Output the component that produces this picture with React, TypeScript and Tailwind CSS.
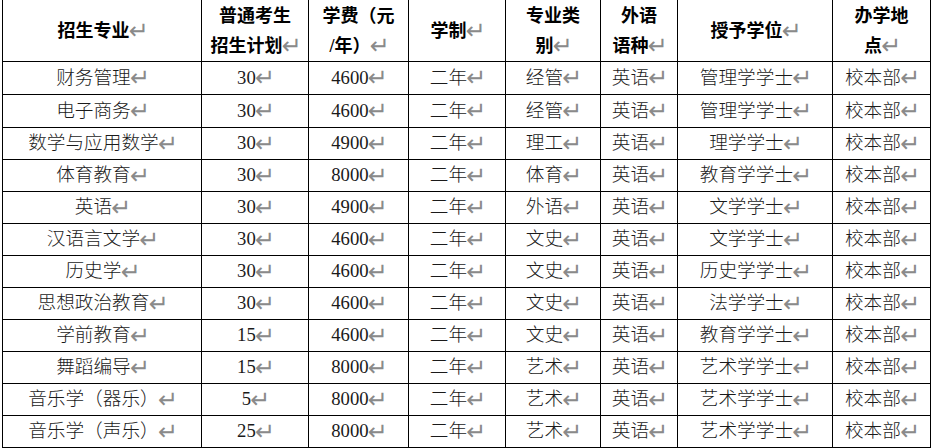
import React from "react";

const widths = ["w-[199px]", "w-[107px]", "w-[100px]", "w-[97px]", "w-[95px]", "w-[77px]", "w-[155px]", "w-[98px]"];

const header: string[][] = [
  ["招生专业"],
  ["普通考生", "招生计划"],
  ["学费（元", "/年）"],
  ["学制"],
  ["专业类", "别"],
  ["外语", "语种"],
  ["授予学位"],
  ["办学地", "点"],
];

const rows: string[][] = [
  ["财务管理", "30", "4600", "二年", "经管", "英语", "管理学学士", "校本部"],
  ["电子商务", "30", "4600", "二年", "经管", "英语", "管理学学士", "校本部"],
  ["数学与应用数学", "30", "4900", "二年", "理工", "英语", "理学学士", "校本部"],
  ["体育教育", "30", "8000", "二年", "体育", "英语", "教育学学士", "校本部"],
  ["英语", "30", "4900", "二年", "外语", "英语", "文学学士", "校本部"],
  ["汉语言文学", "30", "4600", "二年", "文史", "英语", "文学学士", "校本部"],
  ["历史学", "30", "4600", "二年", "文史", "英语", "历史学学士", "校本部"],
  ["思想政治教育", "30", "4600", "二年", "文史", "英语", "法学学士", "校本部"],
  ["学前教育", "15", "4600", "二年", "文史", "英语", "教育学学士", "校本部"],
  ["舞蹈编导", "15", "8000", "二年", "艺术", "英语", "艺术学学士", "校本部"],
  ["音乐学（器乐）", "5", "8000", "二年", "艺术", "英语", "艺术学学士", "校本部"],
  ["音乐学（声乐）", "25", "8000", "二年", "艺术", "英语", "艺术学学士", "校本部"],
];

const rowHeights = [
  "h-[33px]", "h-[33px]", "h-[32px]", "h-[32px]", "h-[32px]", "h-[32px]",
  "h-[32px]", "h-[32px]", "h-[32px]", "h-[32px]", "h-[32px]", "h-[32px]",
];

function Mark() {
  return (
    <span className="inline-block text-[24px] leading-none text-[#8a8a8a] font-['DejaVu_Sans',sans-serif] font-normal -ml-[1px] -mr-[2px]">↵</span>
  );
}

export default function App() {
  return (
    <div className="w-[935px] h-[448px] bg-white overflow-hidden">
      <div className="ml-[2px] w-[929px] border-l border-black font-['Liberation_Serif','Noto_Sans_CJK_SC',serif] text-[18.67px]">
        <div className="flex h-[62px] border-b border-black">
          {header.map((lines, i) => (
            <div
              key={i}
              className={`${widths[i]} shrink-0 border-r border-black flex flex-col items-center justify-center font-bold text-black leading-[30px] text-[18px]`}
            >
              {lines.map((l, j) => (
                <div key={j} className="whitespace-nowrap flex items-center">
                  {l}
                  {j === lines.length - 1 && <Mark />}
                </div>
              ))}
            </div>
          ))}
        </div>
        {rows.map((r, ri) => (
          <div key={ri} className={`flex ${rowHeights[ri]} border-b border-black`}>
            {r.map((c, ci) => (
              <div
                key={ci}
                className={`${widths[ci]} shrink-0 border-r border-black flex items-center justify-center whitespace-nowrap text-[#1a1a1a] font-light leading-none`}
              >
                {c}
                <Mark />
              </div>
            ))}
          </div>
        ))}
      </div>
    </div>
  );
}
